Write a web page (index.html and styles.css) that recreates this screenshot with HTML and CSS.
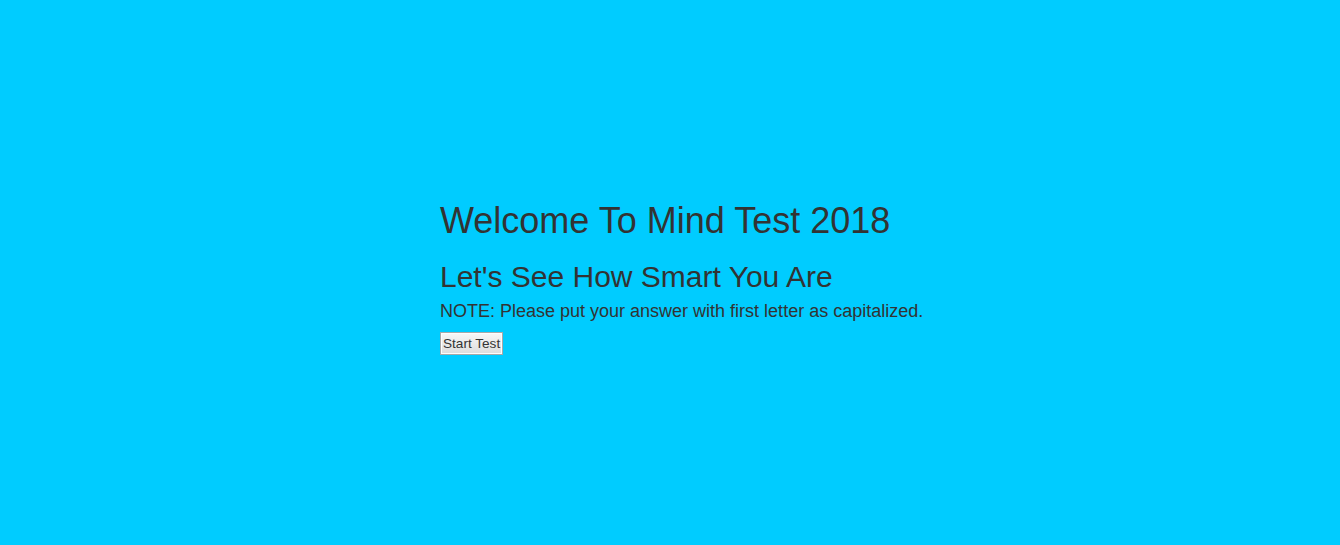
FILE: index.html
```html
<!DOCTYPE html>
<html>
<head>
<meta charset="utf-8">
<link rel="stylesheet" href="styles.css">
</head>
<body>
<main class="intro">
  <h1 class="title">Welcome To Mind Test 2018</h1>
  <h2 class="subtitle">Let's See How Smart You Are</h2>
  <p class="note">NOTE: Please put your answer with first letter as capitalized.</p>
  <button class="start">Start Test</button>
</main>
</body>
</html>
```
FILE: styles.css
```css
html, body {
  margin: 0;
  padding: 0;
  background: #00ccff;
  height: 100%;
}
body {
  font-family: "Liberation Sans", Arial, sans-serif;
  color: #333333;
}
.intro {
  width: 460px;
  margin: 0 auto;
  padding-top: 200px;
}
.title {
  font-size: 36px;
  font-weight: normal;
  margin: 0 0 18px;
}
.subtitle {
  font-size: 30px;
  font-weight: normal;
  margin: 0 0 7px;
}
.note {
  font-size: 18px;
  margin: 0 0 10px;
  white-space: nowrap;
}
.start {
  font-family: "Liberation Sans", Arial, sans-serif;
  font-size: 13.6px;
  color: #333;
  background: linear-gradient(#f7f7f7, #dddddd);
  border: 1px solid #a8a8a8;
  border-radius: 0;
  padding: 3px 2px;
  line-height: 15px;
  box-shadow: inset 0 0 0 1px #fdfdfd;
}
```
